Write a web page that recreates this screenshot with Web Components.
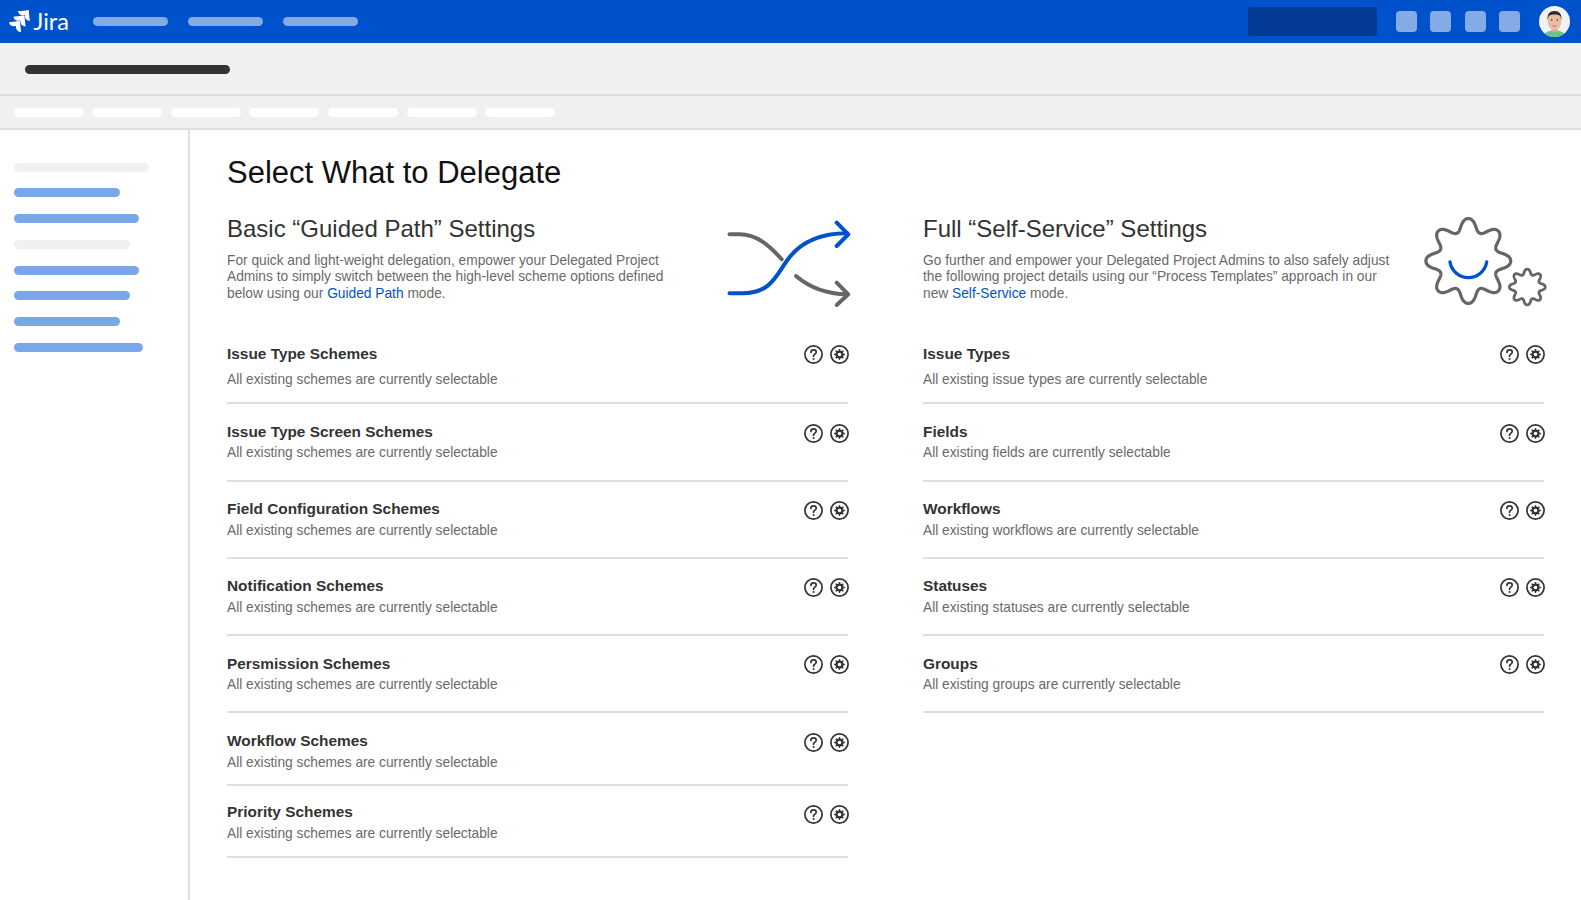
<!DOCTYPE html>
<html lang="en">
<head>
<meta charset="utf-8">
<title>Select What to Delegate</title>
<style>
  html, body { margin: 0; height: 100%; }
  body { font-family: "Liberation Sans", Arial, sans-serif; background: #fff; overflow: hidden; }
  a { color: #0052cc; text-decoration: none; }
</style>
</head>
<body>
<jira-shell>
  <jira-topbar slot="top"></jira-topbar>
  <jira-subheader slot="top"></jira-subheader>
  <side-nav slot="side"></side-nav>
  <delegate-page>
    <settings-column heading="Basic “Guided Path” Settings" art="shuffle" copy-width="445">
      <span slot="copy">For quick and light-weight delegation, empower your Delegated Project Admins to simply switch between the high-level scheme options defined below using our <a href="#">Guided Path</a> mode.</span>
      <setting-row name="Issue Type Schemes" note="All existing schemes are currently selectable" first></setting-row>
      <setting-row name="Issue Type Screen Schemes" note="All existing schemes are currently selectable"></setting-row>
      <setting-row name="Field Configuration Schemes" note="All existing schemes are currently selectable"></setting-row>
      <setting-row name="Notification Schemes" note="All existing schemes are currently selectable"></setting-row>
      <setting-row name="Persmission Schemes" note="All existing schemes are currently selectable"></setting-row>
      <setting-row name="Workflow Schemes" note="All existing schemes are currently selectable" short></setting-row>
      <setting-row name="Priority Schemes" note="All existing schemes are currently selectable" short tight></setting-row>
    </settings-column>
    <settings-column heading="Full “Self-Service” Settings" art="gears" copy-width="475">
      <span slot="copy">Go further and empower your Delegated Project Admins to also safely adjust the following project details using our “Process Templates” approach in our new <a href="#">Self-Service</a> mode.</span>
      <setting-row name="Issue Types" note="All existing issue types are currently selectable" first></setting-row>
      <setting-row name="Fields" note="All existing fields are currently selectable"></setting-row>
      <setting-row name="Workflows" note="All existing workflows are currently selectable"></setting-row>
      <setting-row name="Statuses" note="All existing statuses are currently selectable"></setting-row>
      <setting-row name="Groups" note="All existing groups are currently selectable"></setting-row>
    </settings-column>
  </delegate-page>
</jira-shell>

<script>
// wavy outline for the gears, r = R + A*(cos(n*t) - .04*cos(3*n*t)) so the lobes stay round
function gearPath(cx, cy, R, A, n) {
  let d = "";
  for (let i = 0; i < 360; i++) {
    let t = i / 360 * Math.PI * 2;
    let r = R + A * (Math.cos(n * t) - 0.04 * Math.cos(3 * n * t));
    let x = cx + r * Math.sin(t);
    let y = cy - r * Math.cos(t);
    d += (i ? "L" : "M") + x.toFixed(2) + " " + y.toFixed(2);
  }
  return d + "Z";
}

class JiraShell extends HTMLElement {
  constructor() {
    super();
    this.attachShadow({mode: 'open'});
    this.shadowRoot.innerHTML = `
      <style>
        :host { display: grid; grid-template-rows: auto 1fr; grid-template-columns: 190px 1fr; height: 900px; }
        .top { grid-column: 1 / -1; display: block; }
      </style>
      <div class="top"><slot name="top"></slot></div>
      <slot name="side"></slot>
      <slot></slot>
    `
  }
}
customElements.define("jira-shell", JiraShell);

class JiraTopbar extends HTMLElement {
  constructor() {
    super();
    this.attachShadow({mode: 'open'});
    this.shadowRoot.innerHTML = `
      <style>
        :host { display: flex; align-items: center; height: 43px; background: #0052cc; padding: 0 11px 0 9px; }
        .logo { display: flex; align-items: center; gap: 3.500px; width: 83.500px; color: #fff; font: 400 23.500px/43px Lato, sans-serif; }
        .logo svg { width: 21px; height: 21px; margin-top: -1px; transform: rotate(-6deg); }
        .links { display: flex; gap: 20px; flex: 1; }
        .links i { width: 75px; height: 9px; border-radius: 5px; background: #85abe7; }
        .search { width: 129px; height: 29px; border-radius: 3px; background: #023a96; margin-right: 19.500px; }
        .btn { width: 21px; height: 21px; border-radius: 4px; background: #85abe7; margin-right: 13.300px; }
        .btn.last { margin-right: 19px; }
        .avatar { width: 31px; height: 31px; }
      </style>
      <div class="logo">
        <svg viewBox="0 0 24 24" fill="#fff"><path d="M11.571 11.513H0a5.218 5.218 0 0 0 5.232 5.215h2.13v2.057A5.215 5.215 0 0 0 12.575 24V12.518a1.005 1.005 0 0 0-1.005-1.005zm5.723-5.756H5.736a5.215 5.215 0 0 0 5.215 5.214h2.129v2.058a5.218 5.218 0 0 0 5.215 5.214V6.758a1.001 1.001 0 0 0-1.001-1.001zM23.013 0H11.455a5.215 5.215 0 0 0 5.215 5.215h2.129v2.057A5.215 5.215 0 0 0 24 12.483V1.005A1.001 1.001 0 0 0 23.013 0Z"/></svg>
        <span>Jira</span>
      </div>
      <div class="links"><i></i><i></i><i></i></div>
      <div class="search"></div>
      <div class="btn"></div><div class="btn"></div><div class="btn"></div><div class="btn last"></div>
      <svg class="avatar" viewBox="0 0 31 31">
        <defs><clipPath id="c"><circle cx="15.5" cy="15.5" r="15.5"/></clipPath></defs>
        <g clip-path="url(#c)">
          <rect width="31" height="31" fill="#f3f3f3"/>
          <path d="M4 31c1-5 6-6.500 11.500-6.500S26 26 27 31z" fill="#6fbd92"/>
          <rect x="12.500" y="20" width="6" height="6" fill="#dba98f"/>
          <path d="M8.800 11c0-4 3-5.500 6.700-5.500s6.700 1.500 6.700 5.500v5c0 5-3.500 8-6.700 8s-6.700-3-6.700-8z" fill="#e9bca4"/>
          <path d="M8.500 14c-.5-6 2.500-9 7-9s7.500 3 7 9l-1-3.500c-1-1.500-3-2-6-2s-5 .5-6 2z" fill="#2b2b2b"/>
          <circle cx="12.700" cy="14" r=".8" fill="#333"/><circle cx="18.300" cy="14" r=".8" fill="#333"/>
          <path d="M13.500 20h4" stroke="#a8705c" stroke-width=".9"/>
        </g>
      </svg>
    `
  }
}
customElements.define("jira-topbar", JiraTopbar);

class JiraSubheader extends HTMLElement {
  constructor() {
    super();
    this.attachShadow({mode: 'open'});
    this.shadowRoot.innerHTML = `
      <style>
        :host { display: block; background: #f0f0f0; }
        .crumb { height: 51px; border-bottom: 2px solid #dedede; display: flex; align-items: center; padding: 0 0 0 25px; box-sizing: content-box; }
        .crumb i { width: 205px; height: 9px; border-radius: 5px; background: #333; margin-top: 1px; }
        .tabs { height: 32px; border-bottom: 2px solid #dedede; display: flex; align-items: center; gap: 8.600px; padding-left: 13.700px; }
        .tabs i { width: 70px; height: 9px; border-radius: 5px; background: #fff; }
      </style>
      <div class="crumb"><i></i></div>
      <div class="tabs"><i></i><i></i><i></i><i></i><i></i><i></i><i></i></div>
    `
  }
}
customElements.define("jira-subheader", JiraSubheader);

class SideNav extends HTMLElement {
  constructor() {
    super();
    this.attachShadow({mode: 'open'});
    let items = [[135,0],[106,1],[125,1],[116,0],[125,1],[116,1],[106,1],[129,1]];
    this.shadowRoot.innerHTML = `
      <style>
        :host { display: flex; flex-direction: column; gap: 16.800px; padding: 32.500px 0 0 13.700px; border-right: 2px solid #dedede; box-sizing: border-box; width: 190px; }
        i { height: 9px; border-radius: 5px; background: #f0f0f0; }
        i.on { background: #7aa7e9; }
      </style>
      ${items.map(it => `<i class="${it[1] ? 'on' : ''}" style="width:${it[0]}px"></i>`).join("")}
    `
  }
}
customElements.define("side-nav", SideNav);

class DelegatePage extends HTMLElement {
  constructor() {
    super();
    this.attachShadow({mode: 'open'});
    this.shadowRoot.innerHTML = `
      <style>
        :host { display: block; padding: 23px 37px 0 37px; }
        h1 { margin: 0 0 22px; font-size: 31px; line-height: 40px; font-weight: 400; color: #111; }
        .cols { display: grid; grid-template-columns: 621px 621px; column-gap: 75px; align-items: start; }
      </style>
      <h1>Select What to Delegate</h1>
      <div class="cols"><slot></slot></div>
    `
  }
}
customElements.define("delegate-page", DelegatePage);

const ART = {
  shuffle: `
    <svg style="width:128px;height:90px;margin:5px -5px 0 0" viewBox="15 14 128 90" fill="none" stroke-width="4" stroke-linecap="round" stroke-linejoin="round">
      <g stroke="#666">
        <path d="M19.500 28.300h10C47 28.300 60 40 71.700 53.300"/>
        <path d="M86 70C99 81 116 88 137 88.300"/>
        <path d="M126.700 76.700L138.300 88.300L126.700 99"/>
      </g>
      <g stroke="#0052cc">
        <path d="M19.500 87.300H33C60 87.300 66 70 76.700 55C87 40 106 27.300 137 27.300"/>
        <path d="M126.700 16.700L138.300 28.300L126.700 40"/>
      </g>
    </svg>`,
  gears: `
    <svg style="width:126px;height:92px;margin:1px -4px 0 0" viewBox="22 10 126 92" fill="none" stroke-linecap="round">
      <path d="${gearPath(68.3, 55, 36.2, 6.45, 8)}" stroke="#666" stroke-width="3.200"/>
      <path d="${gearPath(127.3, 81, 15.3, 2.7, 8)}" stroke="#666" stroke-width="2.800"/>
      <path d="M50 56A18.600 18.600 0 0 0 86.700 56" stroke="#0052cc" stroke-width="3.300"/>
    </svg>`
};

class SettingsColumn extends HTMLElement {
  constructor() {
    super();
    this.attachShadow({mode: 'open'});
    this.shadowRoot.innerHTML = `
      <style>
        :host { display: block; }
        .head { display: flex; justify-content: space-between; align-items: flex-start; height: 112px; }
        h2 { margin: 0 0 9.500px; font-size: 24px; line-height: 28px; font-weight: 400; color: #333; }
        p { margin: 0; font-size: 13.750px; line-height: 16.500px; color: #6a6a6a; }
      </style>
      <div class="head">
        <div>
          <h2>${this.getAttribute("heading")}</h2>
          <p style="width:${this.getAttribute("copy-width")}px"><slot name="copy"></slot></p>
        </div>
        ${ART[this.getAttribute("art")]}
      </div>
      <slot></slot>
    `
  }
}
customElements.define("settings-column", SettingsColumn);

class SettingRow extends HTMLElement {
  constructor() {
    super();
    this.attachShadow({mode: 'open'});
    this.shadowRoot.innerHTML = `
      <style>
        :host { display: block; box-sizing: border-box; height: 77.300px; padding-top: 17.500px; border-bottom: 2px solid #dedede; }
        :host([short]) { height: 72.400px; }
        :host([first]), :host([tight]) { padding-top: 16.500px; }
        .line { display: flex; justify-content: space-between; align-items: center; height: 20px; }
        b { font-size: 15.400px; line-height: 20px; color: #333; }
        .note { font-size: 13.750px; line-height: 22px; color: #6a6a6a; margin-top: .7px; }
        :host([first]) .note { margin-top: 5.700px; }
        .icons { display: flex; gap: 7px; margin: 2.500px -1px 0 0; }
        :host([first]) .icons { margin-top: 1px; }
        :host([short]) .icons { margin-top: 3.500px; }
        svg { width: 19px; height: 19px; display: block; }
      </style>
      <div class="line">
        <b>${this.getAttribute("name")}</b>
        <div class="icons">
          <svg viewBox="0 0 19 19" fill="none" stroke="#333" stroke-width="1.700" stroke-linecap="round">
            <circle cx="9.500" cy="9.500" r="8.600"/>
            <path d="M6.900 7.400c0-1.600 1.200-2.500 2.700-2.500 1.500 0 2.600 1 2.600 2.300 0 1.900-2.700 2-2.700 4"/>
            <circle cx="9.500" cy="14" r=".7" fill="#333" stroke-width=".6"/>
          </svg>
          <svg viewBox="0 0 19 19" fill="none" stroke="#333" stroke-width="1.700">
            <circle cx="9.500" cy="9.500" r="8.600"/>
            <path d="${gearPath(9.5, 9.5, 4.6, 0.9, 8)}" fill="#333" stroke="none"/>
            <circle cx="9.500" cy="9.500" r="1.800" fill="#fff" stroke="none"/>
          </svg>
        </div>
      </div>
      <div class="note">${this.getAttribute("note")}</div>
    `
  }
}
customElements.define("setting-row", SettingRow);
</script>
</body>
</html>
